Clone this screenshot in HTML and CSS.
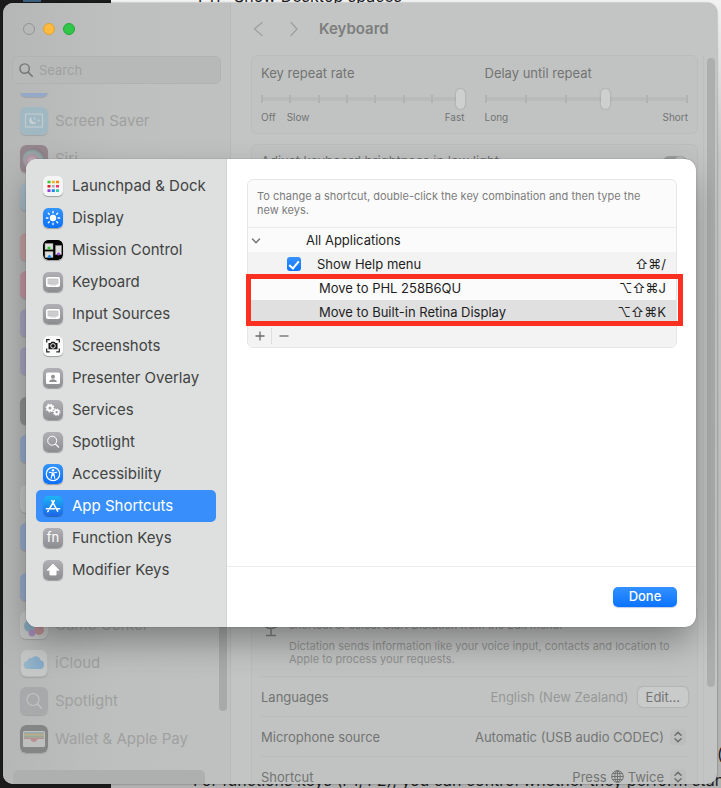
FILE: index.html
```
<!DOCTYPE html>
<html lang="en">
<head>
<meta charset="utf-8">
<meta name="viewport" content="width=device-width, initial-scale=1">
<title>Keyboard Shortcuts</title>
<link rel="stylesheet" href="styles.css">
</head>
<body>
<svg class="defs" aria-hidden="true">
  <defs>
    <linearGradient id="gray" x1="0" y1="0" x2="0" y2="1"><stop offset="0" stop-color="#b0b0b5"/><stop offset="1" stop-color="#8c8c91"/></linearGradient>
    <linearGradient id="blue" x1="0" y1="0" x2="0" y2="1"><stop offset="0" stop-color="#3595fd"/><stop offset="1" stop-color="#0a70fb"/></linearGradient>
    <linearGradient id="store" x1="0" y1="0" x2="0" y2="1"><stop offset="0" stop-color="#1db4f6"/><stop offset="1" stop-color="#1c66e8"/></linearGradient>
    <linearGradient id="cloud" x1="0" y1="0" x2="1" y2="0"><stop offset="0" stop-color="#97b9c9"/><stop offset="1" stop-color="#84a8c9"/></linearGradient>
    <radialGradient id="siri" cx=".42" cy=".62" r=".6"><stop offset="0" stop-color="#d3c3cb"/><stop offset=".45" stop-color="#ae95a2"/><stop offset=".75" stop-color="#8fa8a7"/><stop offset="1" stop-color="#8c7f85"/></radialGradient>
    <symbol id="kb" viewBox="0 0 20 20"><rect width="20" height="20" rx="5" fill="url(#gray)"/><rect x="3" y="5" width="14" height="10" rx="1.8" fill="#fff"/><path d="M5 7h10v5H5zM7 13h6" fill="#d3d3d6" stroke="#c0c0c4" stroke-width=".8"/><path d="M7 7v5M9 7v5M11 7v5M13 7v5" stroke="#bbb" stroke-width=".5"/></symbol>
    <symbol id="updown" viewBox="0 0 16 16"><rect width="16" height="16" rx="4" fill="#bcbebd"/><path d="M5 6.2 8 3.2l3 3M5 9.8l3 3 3-3" fill="none" stroke="#6c6e6d" stroke-width="1.5" stroke-linecap="round" stroke-linejoin="round"/></symbol>
  </defs>
</svg>

<div class="desktop" aria-hidden="true">
  <div class="editor"><i></i></div>
  <div class="article"><p>F11 : Show Desktop spaces</p><p class="aside">(</p><p class="last">For functions keys (F1, F2), you can control whether they perform standard</p></div>
</div>

<div class="window">
  <aside class="sidebar">
    <div class="lights"><button class="light" aria-label="Close"></button><button class="light amber" aria-label="Minimise"></button><button class="light green" aria-label="Zoom"></button></div>
    <label class="search">
      <svg viewBox="0 0 14 14" width="14" height="14"><circle cx="5.6" cy="5.6" r="4.7" fill="none" stroke="#747675" stroke-width="1.4"/><path d="m9.2 9.2 4 4" stroke="#747675" stroke-width="1.6" stroke-linecap="round"/></svg>
      <input type="search" placeholder="Search" aria-label="Search">
    </label>
    <div class="sidescroll">
      <ul class="group first">
        <li><i class="tile wall"></i></li>
        <li><svg class="pic" viewBox="0 0 28 28"><rect width="28" height="28" rx="6" fill="#a0b8c2"/><rect x="5.5" y="7" width="17" height="13" fill="none" stroke="#c1cbd0" stroke-width="1.2"/><path d="M11.5 10a3.8 3.8 0 1 0 5 5 3.8 3.8 0 0 1-5-5z" fill="#c8d0d4"/><circle cx="14.5" cy="11.5" r=".9" fill="#c8d0d4"/><circle cx="18.5" cy="13.5" r=".9" fill="#c8d0d4"/></svg>Screen Saver</li>
        <li><svg class="pic" viewBox="0 0 28 28"><rect width="28" height="28" rx="6" fill="#94868c"/><circle cx="14" cy="14" r="11" fill="url(#siri)"/></svg>Siri</li>
        <li><i class="tile sky"></i></li>
      </ul>
      <ul class="group"><li><i class="tile red"></i></li><li><i class="tile pink"></i></li><li><i class="tile violet"></i></li><li><i class="tile violet"></i></li></ul>
      <ul class="group"><li><i class="tile dark"></i></li><li><i class="tile wall"></i></li></ul>
      <ul class="group"><li><i class="tile pale"></i></li><li><i class="tile wall"></i></li></ul>
      <ul class="group">
        <li><i class="tile wall"></i></li>
        <li><svg class="pic" viewBox="0 0 28 28"><rect width="28" height="28" rx="6" fill="#c3c5c4"/><circle cx="10" cy="15" r="6" fill="#86a9bd"/><circle cx="19" cy="19" r="5" fill="#bb9095"/><circle cx="12" cy="22" r="3.4" fill="#a68dbb"/></svg>Game Center</li>
        <li><svg class="pic" viewBox="0 0 28 28"><rect x="1" y="1" width="26" height="26" rx="6" fill="#c6c8c7"/><path d="M8 20a4 4 0 0 1-.6-8 3.4 3.4 0 0 1 4.3-2.800A5 5 0 0 1 20.500 11a4.700 4.700 0 0 1 .2 9z" fill="url(#cloud)"/></svg>iCloud</li>
        <li><svg class="pic" viewBox="0 0 28 28"><rect width="28" height="28" rx="6" fill="#a8a9ab"/><circle cx="13" cy="12.500" r="6" fill="none" stroke="#c1c2c3" stroke-width="1.200"/><path d="m17.500 17 4 4" stroke="#c1c2c3" stroke-width="1.600" stroke-linecap="round"/></svg>Spotlight</li>
        <li><svg class="pic" viewBox="0 0 28 28"><rect width="28" height="28" rx="6" fill="#848685"/><rect x="3" y="6" width="22" height="16" rx="1.500" fill="#bec0bf"/><path d="M4 7h20v2H4z" fill="#96a8b0"/><path d="M4 8.500h20v2H4z" fill="#bbaa86"/><path d="M4 10.500h20v2H4z" fill="#93aa91"/><path d="M4 12.500h20v1.500h-6c-1 0-1 3-4 3s-3-3-4-3H4z" fill="#b88f8f"/></svg>Wallet &amp; Apple Pay</li>
      </ul>
      <div class="current"></div>
      <div class="thumb"></div>
    </div>
  </aside>

  <main class="main">
    <header class="toolbar">
      <button aria-label="Back"><svg width="10" height="16" viewBox="0 0 10 16"><path d="M9 1.500 1.500 8 9 14.500"/></svg></button>
      <button aria-label="Forward"><svg width="10" height="16" viewBox="0 0 10 16"><path d="M2 1.500 8 8l-6 6.500"/></svg></button>
      <h1>Keyboard</h1>
    </header>
    <div class="settings">
      <div class="cards">
        <section class="card rates">
          <div>
            <label for="rate">Key repeat rate</label>
            <div class="slider"><div class="ticks"><i></i><i></i><i></i><i></i><i></i><i></i><i></i><i></i></div><input id="rate" type="range" min="0" max="7" value="7"></div>
            <div class="scale"><span>Off</span><span>Slow</span><span class="end">Fast</span></div>
          </div>
          <div>
            <label for="delay">Delay until repeat</label>
            <div class="slider"><div class="ticks wide"><i></i><i></i><i></i><i></i><i></i><i></i></div><input id="delay" type="range" min="0" max="5" value="3"></div>
            <div class="scale"><span>Long</span><span class="end">Short</span></div>
          </div>
        </section>
        <section class="card light-row"><label for="dim">Adjust keyboard brightness in low light</label><input id="dim" type="checkbox" checked class="toggle"></section>
        <section class="card dictation">
          <div class="about">
            <svg width="20" height="28" viewBox="0 0 20 28"><rect x="6" y="1" width="8" height="15" rx="4" fill="#7e807f"/><path d="M2 10c0 10 16 10 16 0M10 18v6.500M5 24.500h10" fill="none" stroke="#7e807f" stroke-width="1.500"/></svg>
            <div><p>Use Dictation wherever you can type text. To start dictating, use the shortcut or select Start Dictation from the Edit menu.</p><p>Dictation sends information like your voice input, contacts and location to Apple to process your requests.</p></div>
          </div>
          <div class="row"><span>Languages</span><span class="value faint">English (New Zealand)</span><button class="edit">Edit…</button></div>
          <div class="row"><span>Microphone source</span><span class="value">Automatic (USB audio CODEC)</span><svg class="pick" width="16" height="16"><use href="#updown"/></svg></div>
          <div class="row"><span>Shortcut</span><span class="value">Press <svg class="globe" width="13" height="13" viewBox="0 0 13 13"><circle cx="6.500" cy="6.500" r="5.800"/><ellipse cx="6.500" cy="6.500" rx="2.700" ry="5.800"/><path d="M.7 6.500h11.600M6.500.7v11.600M1.800 3.400h9.400M1.800 9.600h9.400"/></svg> Twice</span><svg class="pick" width="16" height="16"><use href="#updown"/></svg></div>
        </section>
      </div>
      <div class="gutter"><div class="bar"></div></div>
    </div>
  </main>

  <div class="sheet" role="dialog" aria-label="Keyboard shortcuts">
    <nav class="topics">
      <a href="#"><svg viewBox="0 0 20 20"><rect width="20" height="20" rx="5" fill="#f5f5f6"/><g stroke-width="2.600"><path d="M4.500 6h3" stroke="#35c935"/><path d="M8.800 6h3" stroke="#f3b61f"/><path d="M13 6h3" stroke="#f18a1d"/><path d="M4.500 10.300h3" stroke="#e02020"/><path d="M8.800 10.300h3" stroke="#adb0b5"/><path d="M13 10.300h3" stroke="#fb3468"/><path d="M4.500 14.600h3" stroke="#8e3fd1"/><path d="M8.800 14.600h3" stroke="#1a86f5"/><path d="M13 14.600h3" stroke="#35cfa3"/></g></svg>Launchpad &amp; Dock</a>
      <a href="#"><svg viewBox="0 0 20 20"><rect width="20" height="20" rx="5" fill="url(#blue)"/><circle cx="10" cy="10" r="3.200" fill="#fff"/><path d="M10 3.300v1.600M10 15.100v1.600M3.300 10h1.600M15.100 10h1.600M5.300 5.300l1 1M13.700 13.700l1 1M5.300 14.700l1-1M13.700 6.300l1-1" stroke="#fff" stroke-width="1.300" stroke-linecap="round"/></svg>Display</a>
      <a href="#"><svg viewBox="0 0 20 20"><rect width="20" height="20" rx="5" fill="#000"/><g fill="#ddd" stroke="#999" stroke-width=".5"><path d="M2 3.500h8v6H2zM2 11.500h8v6H2zM12.500 5.500h6v9h-6z"/></g><circle cx="6" cy="8" r="1.600" fill="#2fd033"/><circle cx="6.500" cy="16.500" r="1.600" fill="#1d8cff"/><circle cx="15.500" cy="14" r="1.600" fill="#9a45dd"/></svg>Mission Control</a>
      <a href="#"><svg><use href="#kb"/></svg>Keyboard</a>
      <a href="#"><svg><use href="#kb"/></svg>Input Sources</a>
      <a href="#"><svg viewBox="0 0 20 20"><rect width="20" height="20" rx="5" fill="#fafafa"/><path d="M3.700 6.500V3.700h3M13.300 3.700h3v2.800M16.300 12.500v3.300h-3M6.700 15.800h-3v-3.300" fill="none" stroke="#222" stroke-width="1.200"/><path d="M5.500 7h2l1-1.300h3L12.500 7h2v6.300h-9z" fill="#171717"/><circle cx="10" cy="9.900" r="2.300" fill="#171717" stroke="#fff" stroke-width=".9"/></svg>Screenshots</a>
      <a href="#"><svg viewBox="0 0 20 20"><rect width="20" height="20" rx="5" fill="url(#gray)"/><rect x="3" y="4.500" width="14" height="11.500" rx="1.600" fill="#fff"/><circle cx="10" cy="8.700" r="2" fill="#909095"/><path d="M6.200 14c0-3.600 7.600-3.600 7.600 0z" fill="#909095"/></svg>Presenter Overlay</a>
      <a href="#"><svg viewBox="0 0 20 20"><rect width="20" height="20" rx="5" fill="url(#gray)"/><g fill="none" stroke="#fff"><circle cx="7" cy="8" r="2.500" stroke-width="1.900"/><circle cx="7" cy="8" r="3.800" stroke-width="1.200" stroke-dasharray="1.500 1.480"/><circle cx="13.700" cy="12.200" r="2" stroke-width="1.700"/><circle cx="13.700" cy="12.200" r="3.200" stroke-width="1.100" stroke-dasharray="1.250 1.260"/></g></svg>Services</a>
      <a href="#"><svg viewBox="0 0 20 20"><rect width="20" height="20" rx="5" fill="url(#gray)"/><circle cx="9.200" cy="8.700" r="4.500" fill="none" stroke="#fff" stroke-width="1"/><path d="m12.600 12.100 3 3" stroke="#fff" stroke-width="1.300" stroke-linecap="round"/></svg>Spotlight</a>
      <a href="#"><svg viewBox="0 0 20 20"><rect width="20" height="20" rx="5" fill="url(#blue)"/><circle cx="10" cy="10" r="6.700" fill="none" stroke="#fff" stroke-width="1.200"/><circle cx="10" cy="6.200" r="1.200" fill="#fff"/><path d="M6.300 8.300 10 9l3.700-.7M10 9v2.500M8.200 14.300 9.200 9.500h1.600l1 4.800M10 9v2" fill="none" stroke="#fff" stroke-width="1.100" stroke-linecap="round" stroke-linejoin="round"/></svg>Accessibility</a>
      <a href="#" class="on" aria-current="page"><svg viewBox="0 0 20 20"><rect width="20" height="20" rx="5" fill="url(#store)"/><path d="m11.300 4.500-5 8.500M5.400 14.700l-.6 1M8.800 4.500l5.800 10.700M3.300 12.700h8.200M13.800 12.700h2.900" fill="none" stroke="#fff" stroke-width="1.500" stroke-linecap="round"/></svg>App Shortcuts</a>
      <a href="#"><span class="fn">fn</span>Function Keys</a>
      <a href="#"><svg viewBox="0 0 20 20"><rect width="20" height="20" rx="5" fill="url(#gray)"/><path d="M10 4 16 10.200h-2.900V15H6.900v-4.800H4z" fill="#fff" stroke="#fff" stroke-width=".8" stroke-linejoin="round"/></svg>Modifier Keys</a>
    </nav>
    <div class="pane">
      <div class="body">
        <div class="panel">
          <p class="hint">To change a shortcut, double-click the key combination and then type the new keys.</p>
          <div class="list">
            <table>
              <tbody>
                <tr><td class="tog"><svg width="10" height="6" viewBox="0 0 10 6"><path d="m1.500 1 3.500 3.700L8.500 1" fill="none" stroke="#747474" stroke-width="1.400" stroke-linecap="round" stroke-linejoin="round"/></svg></td><td colspan="3" class="app">All Applications</td></tr>
                <tr class="alt"><td></td><td class="tick"><input type="checkbox" id="help" checked></td><td><label for="help">Show Help menu</label></td><td class="keys">⇧⌘/</td></tr>
                <tr><td></td><td></td><td class="custom">Move to PHL 258B6QU</td><td class="keys">⌥⇧⌘J</td></tr>
                <tr class="sel"><td></td><td></td><td class="custom">Move to Built-in Retina Display</td><td class="keys">⌥⇧⌘K</td></tr>
              </tbody>
            </table>
            <div class="marker"></div>
          </div>
          <div class="edits">
            <button aria-label="Add"><svg width="10" height="10" viewBox="0 0 10 10"><path d="M5 .5v9M.5 5h9"/></svg></button>
            <button aria-label="Remove"><svg width="10" height="10" viewBox="0 0 10 10"><path d="M.5 5h9"/></svg></button>
          </div>
        </div>
      </div>
      <footer><button class="done">Done</button></footer>
    </div>
  </div>
</div>
</body>
</html>
```
FILE: styles.css
```
* { box-sizing: border-box; }
body, p, h1, ul { margin: 0; padding: 0; }
ul { list-style: none; }
button { border: 0; padding: 0; background: none; font: inherit; color: inherit; }
svg { display: block; flex: none; }

body {
  height: 100vh;
  display: grid;
  overflow: hidden;
  font-family: Inter, "Liberation Sans", sans-serif;
  font-size: 13px;
  line-height: 16px;
}
.defs { position: absolute; width: 0; height: 0; }

/* Documents behind the window */
.desktop { grid-area: 1 / 1; display: flex; min-height: 0; min-width: 0; overflow: hidden; }
.editor { flex: none; width: 111px; background: #1b1b1b; }
.editor i { display: block; width: 18px; height: 2px; margin-left: 23px; background: #3b5f7c; }
.article {
  flex: 1;
  min-width: 0;
  display: flex;
  flex-direction: column;
  background: linear-gradient(#f2f2f2, #c6c6c6 20%, #b2b2b2);
  color: #1c1c1e;
  font-size: 16px;
  line-height: 20px;
  white-space: nowrap;
}
.article p { margin: -14px 0 0 87px; }
.article .aside { margin: auto 0 0; align-self: flex-end; width: 4px; }
.article .last { margin: 6px 0 -2px 82px; }

/* Settings window */
.window {
  grid-area: 1 / 1;
  position: relative;
  margin: 3px 4px 4px 3px;
  min-height: 0;
  display: flex;
  border-radius: 10px;
  overflow: hidden;
  background: #c3c5c4;
  box-shadow: 0 0 2px rgba(0, 0, 0, .5);
  color: #727473;
}
.sidebar {
  flex: none;
  width: 228px;
  display: flex;
  flex-direction: column;
  background: linear-gradient(90deg, #b5b6b6, #bec0bf 50%, #bfc1c0);
  border-right: 1px solid #b7b9b8;
}
.lights { display: flex; gap: 8px; padding: 20px; }
.light { width: 12px; height: 12px; border: 1px solid #939594; border-radius: 50%; }
.amber { background: #febb40; border-color: #e29f30; }
.green { background: #30c748; border-color: #25a838; }
.search {
  display: flex;
  align-items: center;
  gap: 6px;
  height: 28px;
  margin: 1px 9px 9px;
  padding: 0 6px;
  border: 1px solid #b1b3b2;
  border-radius: 6px;
  background: #b7b8b8;
}
.search input { flex: 1; min-width: 0; border: 0; padding: 0; background: none; font: inherit; outline: 0; }
.search input::placeholder { color: #9fa1a0; opacity: 1; }
.sidescroll { position: relative; flex: 1; min-height: 0; overflow: hidden; font-size: 15px; color: #9fa1a0; }
.group { margin-bottom: 12px; }
.first { margin-top: -29px; }
.group li { display: flex; align-items: center; gap: 7px; height: 38px; padding-left: 17px; }
.pic, .tile { width: 28px; height: 28px; border-radius: 6px; box-shadow: 0 1px 1px rgba(0, 0, 0, .12); }
.wall { background: #94a9c8; }
.sky { background: #a5b9c3; }
.red { background: #c39fa1; }
.pink { background: #c195a0; }
.violet { background: #a4a2bf; }
.dark { background: #8d8e8e; }
.pale { background: #c1c3c2; }
.current { height: 40px; margin: 0 25px 0 10px; border-radius: 5px; background: #aeb0af; }
.thumb { position: absolute; right: 3px; top: 200px; width: 8px; height: 418px; border-radius: 4px; background: #a8aaa9; }

.main { flex: 1; min-width: 0; display: flex; flex-direction: column; }
.toolbar { display: flex; align-items: center; height: 52px; padding-left: 22px; color: #7c7e7d; }
.toolbar button { margin-right: 26px; }
.toolbar button + button { margin-right: 20px; }
.toolbar path { fill: none; stroke: #9fa1a0; stroke-width: 1.4; stroke-linecap: round; stroke-linejoin: round; }
h1 { font-size: 15px; line-height: 20px; font-weight: 600; }
.settings { flex: 1; min-height: 0; display: flex; }
.cards { flex: 1; min-width: 0; display: flex; flex-direction: column; gap: 10px; padding: 0 5px 0 20px; overflow: hidden; }
.card { border: 1px solid #bbbdbc; border-radius: 6px; background: #c1c3c2; padding: 0 9px; }
.gutter { width: 14px; padding: 3px 2px 0; border-left: 1px solid #bdbfbe; display: flex; justify-content: center; }
.bar { width: 8px; height: 629px; border-radius: 4px; background: #acaead; }

.rates { flex: none; display: grid; grid-template-columns: 1fr 1fr; gap: 20px; height: 79px; padding-top: 9px; }
.rates label { display: block; }
.slider { display: grid; align-items: center; height: 20px; margin-top: 8px; }
.slider > * { grid-area: 1 / 1; }
.ticks { display: flex; justify-content: space-between; height: 8px; margin-right: 3px; background: linear-gradient(#b9bbba, #b9bbba) center / 100% 4px no-repeat; }
.ticks.wide { margin-right: 0; }
.ticks i { width: 2px; background: #b1b3b2; }
.slider input { appearance: none; width: 100%; height: 20px; margin: 0; background: none; }
.slider input::-webkit-slider-thumb { appearance: none; width: 9px; height: 20px; border-radius: 5px; background: #cecfcf; box-shadow: 0 0 2px rgba(0, 0, 0, .25); }
.scale { display: flex; gap: 11px; font-size: 10px; line-height: 16px; }
.scale .end { margin-left: auto; }

.light-row { flex: 1; display: flex; align-items: flex-start; justify-content: space-between; padding-top: 8px; }
.toggle { appearance: none; width: 26px; height: 15px; margin: 3px 0 0; border-radius: 8px; background: radial-gradient(circle at 18px 7px, #b9b9b9 6px, #9a9c9b 7px); }
.dictation { flex: none; margin-bottom: -13px; }
.about { display: flex; gap: 8px; padding: 0 16px 10px 0; font-size: 11px; line-height: 13px; color: #8f9190; }
.about svg { margin-top: 5px; }
.about p + p { margin-top: 8px; }
.row { display: flex; align-items: center; height: 40px; border-top: 1px solid #b9bbba; }
.value { display: flex; align-items: center; gap: 4px; margin-left: auto; }
.faint { color: #969897; }
.edit { margin-left: 9px; padding: 2px 8px; border-radius: 5px; background: #c9cbca; box-shadow: 0 0 2px rgba(0, 0, 0, .25); }
.pick { margin: 0 2px 0 6px; }
.globe { fill: none; stroke: #6f7170; stroke-width: 1; }

/* Shortcuts sheet */
.sheet {
  position: absolute;
  inset: 156px 21px 157px 23px;
  display: flex;
  border-radius: 11px;
  overflow: hidden;
  background: #fff;
  color: #1e1e1e;
  box-shadow: 0 0 1px rgba(0, 0, 0, .6), 0 16px 36px -4px rgba(0, 0, 0, .38);
}
.topics { flex: none; width: 201px; padding: 11px 10px; background: #dee0df; border-right: 1px solid #d2d4d3; font-size: 15px; color: #414342; }
.topics a { display: flex; align-items: center; gap: 9px; height: 32px; padding-left: 7px; border-radius: 5px; color: inherit; text-decoration: none; }
.topics a > svg, .fn { flex: none; width: 20px; height: 20px; border-radius: 5px; box-shadow: 0 1px 1px rgba(0, 0, 0, .3); }
.topics .on { background: #388ffb; color: #fff; }
.fn { background: linear-gradient(#b0b0b5, #8c8c91); color: #fff; font-size: 13px; line-height: 19px; text-align: center; }

.pane { flex: 1; min-width: 0; display: flex; flex-direction: column; }
.body { flex: 1; padding: 20px 19px 0 20px; }
.panel { border: 1px solid #e6e6e6; border-radius: 6px; background: #fbfbfb; }
.hint { padding: 9px 32px 10px 9px; font-size: 11px; line-height: 14px; color: #7c7c7c; border-bottom: 1px solid #ebebeb; }
.list { position: relative; }
table { width: 100%; border-collapse: collapse; table-layout: auto; }
td { height: 24px; padding: 0; }
.tog { width: 39px; padding-left: 3px; }
.tog svg { margin-top: 2px; }
.tick { width: 30px; }
.tick input { appearance: none; width: 14px; height: 14px; margin: 0; border-radius: 3px; background: linear-gradient(#3792fd, #0b74fd); display: grid; place-items: start center; }
.tick input::after { content: ""; width: 4px; height: 8px; margin-top: 2px; border: solid #fff; border-width: 0 2px 2px 0; transform: rotate(40deg); }
.app { padding-left: 19px; }
.custom { padding-left: 2px; }
.keys { padding-right: 10px; text-align: right; }
.alt { background: #f3f3f3; }
.sel { background: #e0e0e0; }
.marker { position: absolute; left: -2px; right: -7px; bottom: -2px; height: 52px; border: 5px solid #fb3021; }
.edits { display: flex; height: 23px; background: #f3f3f3; border-radius: 0 0 5px 5px; align-items: center; }
.edits button { display: grid; place-items: center; width: 23px; height: 16px; }
.edits button + button { width: 24px; border-left: 1px solid #dedede; }
.edits path { stroke: #6b6b6b; stroke-width: 1.3; fill: none; }
footer { display: flex; justify-content: flex-end; padding: 20px 19px; border-top: 1px solid #ededed; }
.done { width: 64px; height: 20px; border-radius: 5px; background: linear-gradient(#3391ff, #0a73ff); color: #fff; font-weight: 500; line-height: 18px; padding-bottom: 2px; box-shadow: 0 1px 1px rgba(0, 60, 160, .25); }
```
